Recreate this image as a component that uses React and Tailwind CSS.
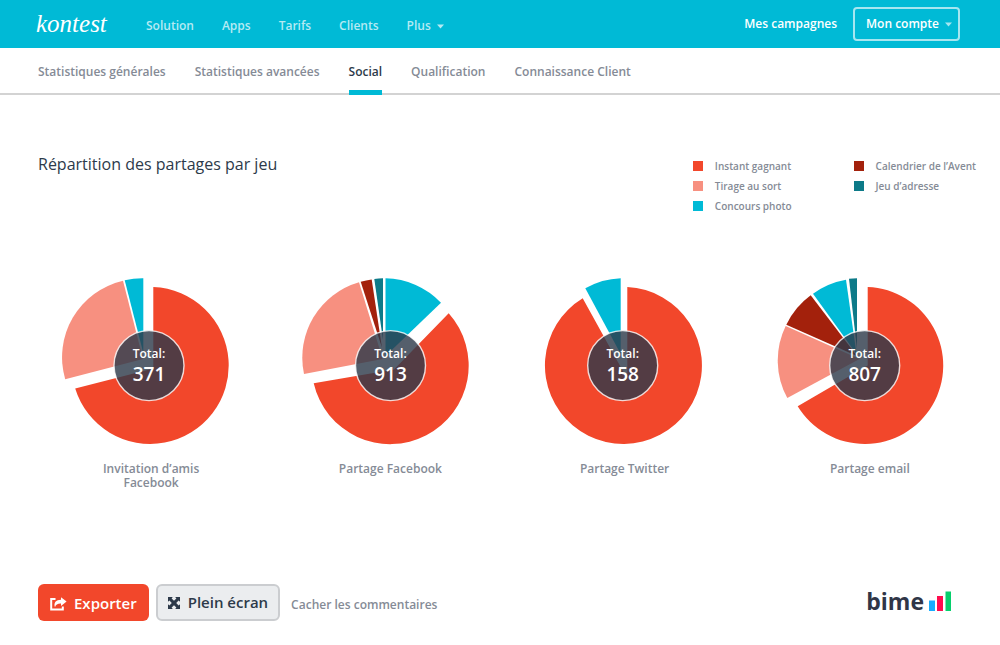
import React from "react";

const COLORS = {
  red: "#f2472b",
  pink: "#f79080",
  cyan: "#00bad6",
  brick: "#a3210c",
  teal: "#0d7a88",
};

const RADIUS = 78.5;

const NAV = ["Solution", "Apps", "Tarifs", "Clients"];

const TABS = [
  "Statistiques générales",
  "Statistiques avancées",
  "Social",
  "Qualification",
  "Connaissance Client",
];

const LEGEND = [
  [
    { label: "Instant gagnant", color: COLORS.red },
    { label: "Tirage au sort", color: COLORS.pink },
    { label: "Concours photo", color: COLORS.cyan },
  ],
  [
    { label: "Calendrier de l’Avent", color: COLORS.brick },
    { label: "Jeu d’adresse", color: COLORS.teal },
  ],
];

// Each slice: colour, apex, arc start, arc end, large-arc flag.
const CHARTS = [
  {
    label: "Invitation d’amis Facebook",
    total: 371,
    viewBox: "1 0 200 185",
    hub: 99,
    slices: [
      ["red", [103.3, 103.5], [103.3, 22], [25.2, 123.6], 1],
      ["pink", [93, 94], [15.2, 114.3], [73, 15.8], 0],
      ["cyan", [93.3, 88], [74.7, 15.3], [93.3, 13.3], 0],
    ],
  },
  {
    label: "Partage Facebook",
    total: 913,
    viewBox: "0 0 200 185",
    hub: 100.5,
    slices: [
      ["red", [104, 104.5], [158.7, 48.3], [23.7, 118.3], 1],
      ["cyan", [95.5, 91], [95.5, 13.3], [151, 37.7], 0],
      ["pink", [92.7, 94], [14, 109], [69, 17.3], 0],
      ["brick", [92, 82.7], [70.7, 16.7], [81.7, 14.5], 0],
      ["teal", [93, 75], [84.3, 14], [93, 13.3], 0],
    ],
  },
  {
    label: "Partage Twitter",
    total: 158,
    viewBox: "-5 0 200 185",
    hub: 92.7,
    slices: [
      ["red", [97.3, 114], [97.3, 22], [52.7, 33.3], 1],
      ["cyan", [90.7, 89], [55.3, 23.3], [90.7, 13.3], 0],
    ],
  },
  {
    label: "Partage email",
    total: 807,
    viewBox: "5 0 200 185",
    hub: 99.7,
    slices: [
      ["red", [102.7, 100.6], [102.7, 22], [32.7, 141.3], 1],
      ["pink", [94.5, 94], [22.3, 133], [20.7, 61], 0],
      ["brick", [92, 91], [21.3, 59.7], [45.7, 30.3], 0],
      ["cyan", [91.5, 89], [48, 28.7], [81, 14.7], 0],
      ["teal", [92, 84], [84, 13.8], [92, 13.3], 0],
    ],
  },
];

function Caret() {
  return (
    <svg width="7" height="5" viewBox="0 0 7 5" aria-hidden="true">
      <path d="M0 0.5h7L3.5 4.5z" fill="currentColor" />
    </svg>
  );
}

function Pie({ chart }) {
  return (
    <figure className="flex flex-col items-center">
      <svg
        width="200"
        height="185"
        viewBox={chart.viewBox}
        role="img"
        aria-label={chart.label}
      >
        {chart.slices.map(([color, apex, from, to, large]) => (
          <path
            key={color}
            fill={COLORS[color]}
            d={`M${apex} L${from} A${RADIUS} ${RADIUS} 0 ${large} 1 ${to} Z`}
          />
        ))}
        <circle
          cx={chart.hub}
          cy="100.6"
          r="35"
          fill="#2d3a4a"
          fillOpacity="0.81"
          stroke="#ffffff"
          strokeOpacity="0.8"
          strokeWidth="1.4"
        />
        <g fill="#ffffff" textAnchor="middle">
          <text x={chart.hub} y="93" className="text-[12px] font-semibold">
            Total:
          </text>
          <text x={chart.hub} y="116" className="text-[19px] font-semibold">
            {chart.total}
          </text>
        </g>
      </svg>
      <figcaption className="mt-3 w-28 text-center text-[12px] leading-[14px] font-semibold text-[#858b96]">
        {chart.label}
      </figcaption>
    </figure>
  );
}

function ShareIcon() {
  return (
    <svg width="17" height="14" viewBox="0 0 17 14" aria-hidden="true">
      <path
        d="M5.5 2H1.2v10.6h11.6V9.5"
        fill="none"
        stroke="currentColor"
        strokeWidth="2"
      />
      <path
        d="M11 0.3l5.6 4.3L11 9V6.4C7.6 6.3 5.8 7.3 5 10.3 3.3 5.7 6 2.7 11 2.7z"
        fill="currentColor"
      />
    </svg>
  );
}

function ExpandIcon() {
  return (
    <svg width="12" height="12" viewBox="0 0 12 12" aria-hidden="true">
      <path
        d="M0 0h4.8L3.6 1.4 6 3.8 8.4 1.4 7.2 0H12v4.8l-1.4-1.2L8.2 6l2.4 2.4L12 7.2V12H7.2l1.2-1.4L6 8.2 3.6 10.6 4.8 12H0V7.2l1.4 1.2L3.8 6 1.4 3.6 0 4.8z"
        fill="currentColor"
      />
    </svg>
  );
}

export default function App() {
  return (
    <div className="bg-white font-['Open_Sans',sans-serif]">
      <header className="flex h-12 items-center bg-[#00bad6] pr-10 pl-9 text-[12px] font-semibold text-[#b5eaf3]">
        <a
          href="#"
          className="w-[110px] font-['Liberation_Serif',serif] text-[25px] leading-8 font-normal text-white italic"
        >
          kontest
        </a>
        <nav className="flex gap-7 pt-1">
          {NAV.map((item) => (
            <a key={item} href="#">
              {item}
            </a>
          ))}
          <button type="button" className="flex items-center gap-1.5">
            Plus <Caret />
          </button>
        </nav>
        <div className="ml-auto flex items-center gap-4 text-white">
          <a href="#">Mes campagnes</a>
          <button
            type="button"
            className="flex h-[34px] items-center gap-1.5 rounded border-2 border-[#a6e6f0] pr-1.5 pl-[11px]"
          >
            Mon compte
            <span className="text-[#a6e6f0]">
              <Caret />
            </span>
          </button>
        </div>
      </header>

      <nav className="flex h-[47px] gap-[29px] border-b-2 border-[#d3d3d3] pl-[38px] text-[12px] font-semibold text-[#858b96]">
        {TABS.map((tab) =>
          tab === "Social" ? (
            <a
              key={tab}
              href="#"
              aria-current="page"
              className="-mb-0.5 flex items-center border-b-5 border-[#00bad6] pt-[5px] text-[#2d3a4a]"
            >
              {tab}
            </a>
          ) : (
            <a key={tab} href="#" className="flex items-center pt-0.5">
              {tab}
            </a>
          )
        )}
      </nav>

      <main>
        <section className="flex h-[170px] items-start justify-between pt-[57px] pr-6 pl-[38px]">
          <h1 className="text-[16px] leading-6 text-[#2d3a4a]">
            Répartition des partages par jeu
          </h1>
          <div className="flex gap-[62px] pt-1 text-[10px] leading-5 font-semibold text-[#858b96]">
            {LEGEND.map((column, index) => (
              <ul key={index}>
                {column.map(({ label, color }) => (
                  <li key={label} className="flex items-center gap-3">
                    <span
                      className="size-2.5"
                      style={{ backgroundColor: color }}
                    />
                    {label}
                  </li>
                ))}
              </ul>
            ))}
          </div>
        </section>
        <section className="grid h-[319px] grid-cols-[240fr_238fr_230fr_260fr] pl-[31px]">
          {CHARTS.map((chart) => (
            <Pie key={chart.label} chart={chart} />
          ))}
        </section>
      </main>

      <footer className="flex items-center pr-12 pl-[38px]">
        <button
          type="button"
          className="flex h-[37px] items-center gap-[7px] rounded-md bg-[#f2472b] px-3 pt-0.5 text-[15px] font-semibold text-white"
        >
          <ShareIcon />
          Exporter
        </button>
        <button
          type="button"
          className="ml-[7px] flex h-[37px] items-center gap-2 rounded-md border-2 border-[#cbcdd0] bg-[#ebedef] px-2.5 text-[15px] font-semibold text-[#2d3a4a]"
        >
          <ExpandIcon />
          Plein écran
        </button>
        <button
          type="button"
          className="ml-[11px] pt-1 text-[12px] font-semibold text-[#858b96]"
        >
          Cacher les commentaires
        </button>
        <a
          href="#"
          className="ml-auto flex items-center gap-1 pb-1 text-[23px] leading-8 font-bold text-[#303647]"
        >
          bime
          <svg width="24" height="20" viewBox="0 0 24 20" aria-hidden="true">
            <path d="M1 9.5h6V20H1z" fill="#16adff" />
            <path d="M9 5h6v15H9z" fill="#ff0c4e" />
            <path d="M17.5 0.5H23V20h-5.5z" fill="#06cf6c" />
          </svg>
        </a>
      </footer>
    </div>
  );
}
